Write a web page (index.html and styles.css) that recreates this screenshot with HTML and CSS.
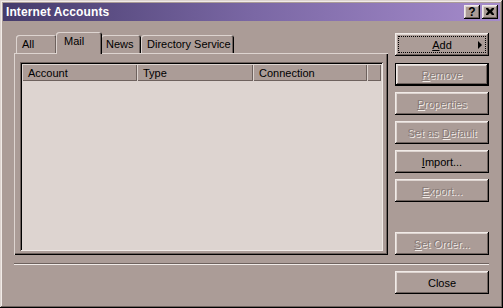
FILE: index.html
```html
<!DOCTYPE html>
<html lang="en">
<head>
    <meta charset="UTF-8">
    <title>Internet Accounts</title>
    <link rel="stylesheet" href="styles.css">
</head>
<body>
    <div class="window">
        <div class="titlebar">
            <span class="title">Internet Accounts</span>
            <div class="caption-buttons">
                <button class="cap-btn">?</button>
                <button class="cap-btn">
                    <svg width="8" height="7" viewBox="0 0 8 7">
                        <path d="M0 0h2l2 2 2-2h2v1l-2 2.5 2 2.5v1h-2l-2-2-2 2h-2v-1l2-2.5-2-2.5z" fill="#000"/>
                    </svg>
                </button>
            </div>
        </div>

        <div class="content">
            <div class="main">
                <div class="tabs-area">
                    <div class="tab-strip">
                        <div class="tab tab-all">All</div>
                        <div class="tab tab-mail selected">Mail</div>
                        <div class="tab tab-news">News</div>
                        <div class="tab tab-dir">Directory Service</div>
                    </div>
                    <div class="panel">
                        <div class="listview">
                            <div class="list-header">
                                <div class="col col-account">Account</div>
                                <div class="col col-type">Type</div>
                                <div class="col col-conn">Connection</div>
                                <div class="col col-fill"></div>
                            </div>
                        </div>
                    </div>
                </div>

                <div class="side-buttons">
                    <button class="btn btn-menu focused">
                        <span></span>
                        <span><u>A</u>dd</span>
                        <span class="arrow"></span>
                    </button>
                    <button class="btn default disabled"><u>R</u>emove</button>
                    <button class="btn disabled"><u>P</u>roperties</button>
                    <button class="btn disabled">Set as <u>D</u>efault</button>
                    <button class="btn"><u>I</u>mport...</button>
                    <button class="btn disabled"><u>E</u>xport...</button>
                    <button class="btn disabled btn-bottom"><u>S</u>et Order...</button>
                </div>
            </div>

            <div class="separator"></div>

            <div class="footer">
                <button class="btn">Close</button>
            </div>
        </div>
    </div>
</body>
</html>
```

FILE: styles.css
```css
:root {
    --face: #ab9c97;
    --light: #ddd4d0;
    --white: #f1ebe8;
    --shadow: #6e625e;
    --dark: #000000;
    --list-bg: #ddd4d0;
    --disabled: #877a76;
}

* {
    margin: 0;
    padding: 0;
    box-sizing: border-box;
}

body {
    background-color: var(--face);
    font-family: 'Liberation Sans', Arial, sans-serif;
    font-size: 11px;
    color: #000;
}

.window {
    width: 503px;
    height: 308px;
    padding: 3px;
    background-color: var(--face);
    box-shadow: inset -1px -1px var(--dark), inset 1px 1px var(--light),
                inset -2px -2px var(--shadow), inset 2px 2px var(--white);
}

/* title bar */
.titlebar {
    height: 18px;
    display: flex;
    align-items: center;
    justify-content: space-between;
    padding-left: 3px;
    padding-right: 2px;
    background: linear-gradient(to right, #453b6b, #7a67a4 50%, #a58bcb);
}

.title {
    color: #fff;
    font-weight: bold;
    font-size: 12px;
    letter-spacing: 0.1px;
}

.caption-buttons {
    display: flex;
    gap: 2px;
}

.cap-btn {
    width: 16px;
    height: 14px;
    border: none;
    background-color: var(--face);
    box-shadow: inset -1px -1px var(--dark), inset 1px 1px var(--white),
                inset -2px -2px var(--shadow), inset 2px 2px var(--light);
    font-family: 'Liberation Sans', Arial, sans-serif;
    font-weight: bold;
    font-size: 12px;
    line-height: 14px;
    display: flex;
    align-items: center;
    justify-content: center;
    padding-bottom: 1px;
}

/* dialog body */
.content {
    padding: 12px 11px 0 11px;
}

.main {
    display: flex;
    height: 222px;
}

.tabs-area {
    width: 374px;
    display: flex;
    flex-direction: column;
}

.tab-strip {
    height: 20px;
    display: flex;
    align-items: flex-end;
    padding-left: 2px;
}

.tab {
    height: 18px;
    padding: 3px 0 0 6px;
    background-color: var(--face);
    border-radius: 3px 3px 0 0;
    box-shadow: inset 1px 1px var(--light), inset -1px 0 var(--dark), inset -2px 0 var(--shadow);
    white-space: nowrap;
}

.tab-all { width: 41px; }
.tab-news { width: 40px; padding-left: 5px; }
.tab-dir { width: 93px; }

.tab.selected {
    width: 46px;
    height: 22px;
    padding: 3px 0 0 8px;
    margin: 0 -1px -1px -1px;
    position: relative;
    z-index: 1;
}

.panel {
    height: 202px;
    padding: 9px 5px 4px 6px;
    background-color: var(--face);
    box-shadow: inset 1px 1px var(--light), inset -1px -1px var(--dark), inset -2px -2px var(--shadow);
}

.listview {
    width: 363px;
    height: 189px;
    padding: 2px;
    background-color: var(--list-bg);
    box-shadow: inset 1px 1px var(--shadow), inset -1px -1px var(--white),
                inset 2px 2px var(--dark), inset -2px -2px var(--light);
}

.list-header {
    display: flex;
    height: 17px;
}

.col {
    height: 17px;
    padding: 3px 0 0 6px;
    background-color: var(--face);
    box-shadow: inset 1px 1px var(--light), inset -1px -1px var(--shadow);
}

.col-account { width: 115px; }
.col-type { width: 116px; }
.col-conn { width: 114px; }
.col-fill { flex: 1; }

/* right column buttons */
.side-buttons {
    margin-left: 7px;
    width: 94px;
    display: flex;
    flex-direction: column;
    gap: 6px;
}

.btn {
    width: 94px;
    height: 23px;
    border: none;
    background-color: var(--face);
    box-shadow: inset -1px -1px var(--dark), inset 1px 1px var(--white),
                inset -2px -2px var(--shadow), inset 2px 2px var(--light);
    font-family: 'Liberation Sans', Arial, sans-serif;
    font-size: 11px;
    color: #000;
}

.btn u {
    text-decoration-thickness: 1px;
    text-underline-offset: 1px;
}

.btn.focused {
    outline: 1px dotted #000;
    outline-offset: -4px;
}

.btn-menu {
    display: grid;
    grid-template-columns: 1fr auto 1fr;
    align-items: center;
}

.arrow {
    justify-self: end;
    margin-right: 7px;
    width: 0;
    height: 0;
    border-top: 4px solid transparent;
    border-bottom: 4px solid transparent;
    border-left: 4px solid #000;
}

.btn.default {
    margin-top: 1px;
    border: 1px solid var(--dark);
}

.btn.disabled {
    color: var(--disabled);
    text-shadow: 1px 1px 0 var(--white);
}

.btn-bottom {
    margin-top: auto;
}

.separator {
    width: 475px;
    margin-top: 8px;
    border-top: 1px solid var(--shadow);
    border-bottom: 1px solid var(--white);
}

.footer {
    display: flex;
    justify-content: flex-end;
    margin-top: 6px;
}
```
